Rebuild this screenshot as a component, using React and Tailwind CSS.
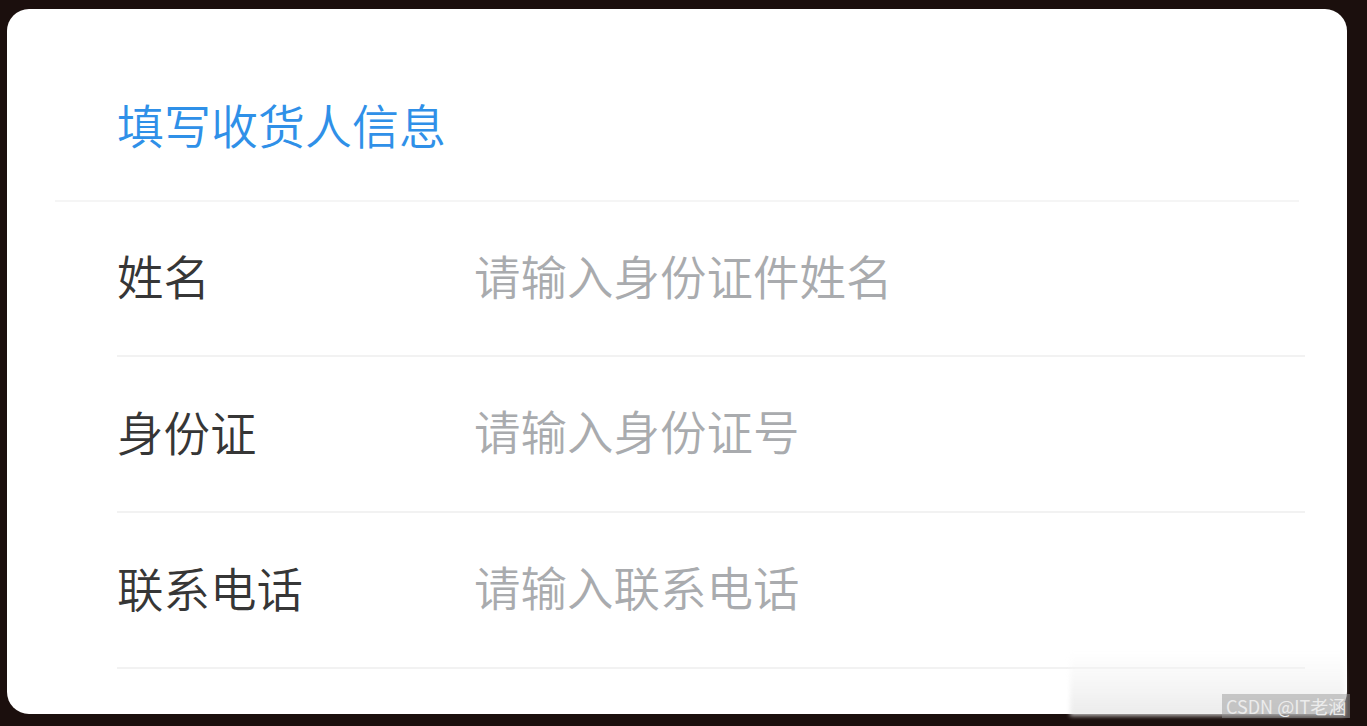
import React from 'react';

const fields = [
  { label: '姓名', placeholder: '请输入身份证件姓名' },
  { label: '身份证', placeholder: '请输入身份证号' },
  { label: '联系电话', placeholder: '请输入联系电话' },
];

export default function App() {
  return (
    <div
      className="w-[1367px] h-[726px] bg-[#1b0f0d] pt-[9px] pl-[7px] pr-[20px] pb-[12px] relative overflow-hidden"
      style={{ fontFamily: '"Noto Sans CJK SC", "Noto Sans", sans-serif' }}
    >
      <div className="h-full bg-white rounded-[22px] flex flex-col">
        {/* Header */}
        <div className="mx-[48px] pt-[91px] pb-[53px] pl-[62px] border-b-2 border-[#f5f5f5]">
          <h1 className="text-[47px] leading-[47px] text-[#2f90e8] font-[350]">填写收货人信息</h1>
        </div>

        {/* Form rows */}
        <div className="ml-[110px] mr-[42px]">
          {fields.map((f, i) => (
            <div
              key={f.label}
              className={`${i === 0 ? 'h-[155px]' : 'h-[156px]'} pb-[8px] flex items-center border-b-2 border-[#f2f2f2]`}
            >
              <label className="w-[357px] text-[46.5px] leading-[47px] text-[#363636] font-[350]">{f.label}</label>
              <input
                type="text"
                placeholder={f.placeholder}
                className="flex-1 bg-transparent outline-none text-[46.5px] leading-[60px] font-[350] text-[#363636] placeholder:text-[#a9abae]"
              />
            </div>
          ))}
        </div>
      </div>

      {/* Watermark */}
      <div className="absolute left-[1070px] top-[652px] w-[275px] h-[64px] bg-gradient-to-b from-white/0 via-[#f3f3f3]/70 to-[#e6e6e6]/80 blur-[2px]" />
      <div className="absolute left-[1222px] top-[694px] h-[24px] px-[4px] bg-[#9a9a9a]/50 flex items-center">
        <span className="text-[18px] leading-none text-[#ececec]">CSDN @IT老涵</span>
      </div>
    </div>
  );
}
